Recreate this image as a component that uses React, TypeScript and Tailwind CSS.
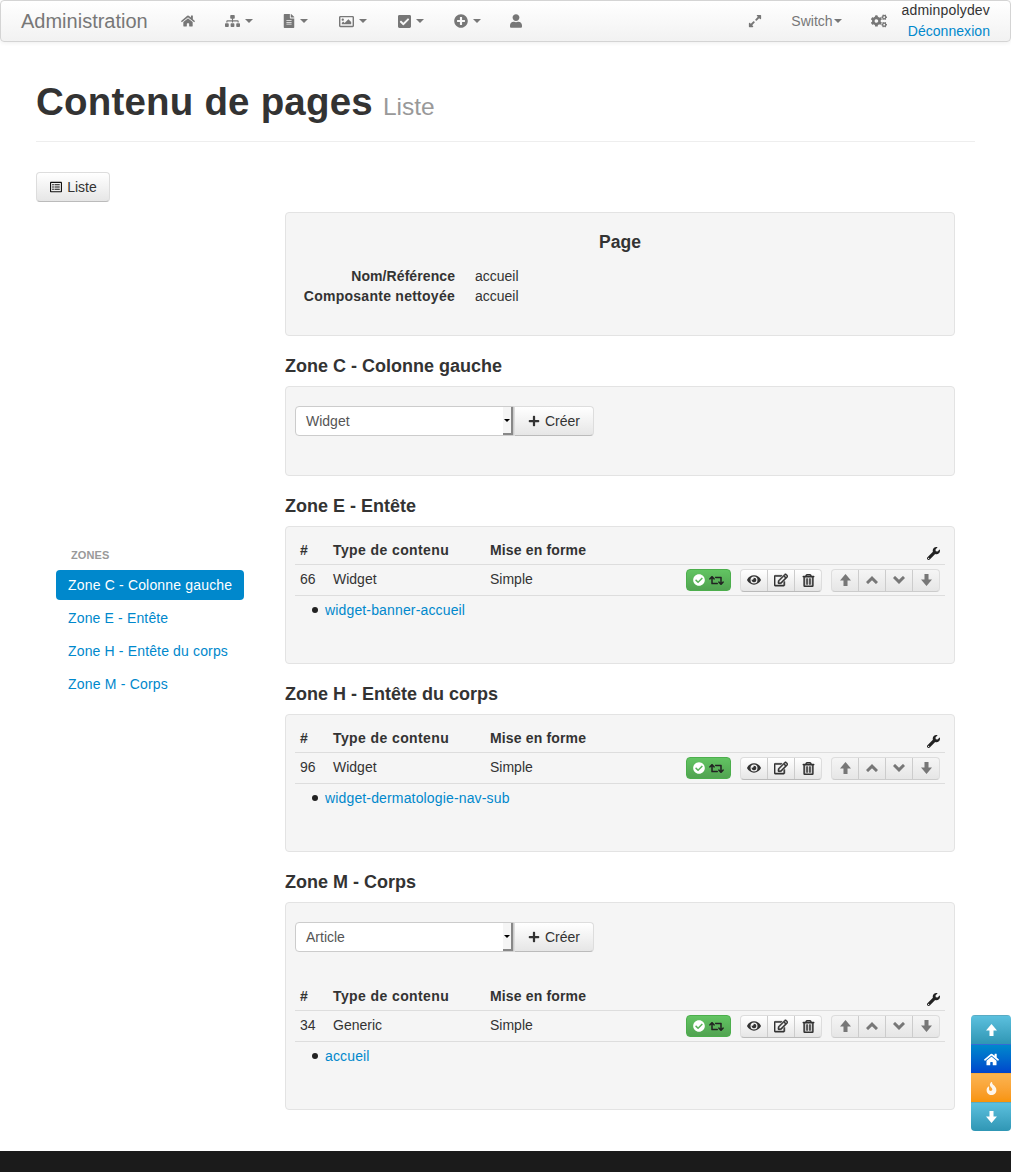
import React from "react";
import {
  FaCheckCircle,
  FaCheckSquare,
  FaCogs,
  FaEye,
  FaFileAlt,
  FaFire,
  FaHome,
  FaPlus,
  FaPlusCircle,
  FaRegEdit,
  FaRegImage,
  FaRegListAlt,
  FaRegTrashAlt,
  FaRetweet,
  FaSitemap,
  FaUser,
  FaWrench,
  FaExpandAlt,
} from "react-icons/fa";

const Caret = ({ className }: { className?: string }) => (
  <span
    className={
      "inline-block h-0 w-0 border-x-[4px] border-t-[4px] border-x-transparent border-t-[#777] " +
      (className || "ml-[5px]")
    }
  />
);

const ArrowUp = () => (
  <svg viewBox="0 0 12 12" className="h-[12px] w-[11px]" preserveAspectRatio="none" fill="currentColor">
    <path d="M6 0 12 6.5H8.2V12H3.8V6.5H0Z" />
  </svg>
);

const ArrowDown = () => (
  <svg viewBox="0 0 12 12" className="h-[12px] w-[11px]" preserveAspectRatio="none" fill="currentColor">
    <path d="M3.8 0H8.2V5.5H12L6 12 0 5.5H3.8Z" />
  </svg>
);

const ChevronUp = () => (
  <svg viewBox="0 0 12 8" className="w-[12px]" fill="none" stroke="currentColor" strokeWidth="3">
    <path d="M1 7 6 2.2 11 7" />
  </svg>
);

const ChevronDown = () => (
  <svg viewBox="0 0 12 8" className="w-[12px]" fill="none" stroke="currentColor" strokeWidth="3">
    <path d="M1 1 6 5.8 11 1" />
  </svg>
);

const NavItem = ({ icon, caret, className }: { icon: React.ReactNode; caret?: boolean; className?: string }) => (
  <div className={"flex items-center text-[#777] " + (className || "px-[15px]")}>
    {icon}
    {caret && <Caret />}
  </div>
);

const CreateForm = ({ value }: { value: string }) => (
  <div className="flex h-[30px] items-center">
    <div className="relative flex h-[30px] w-[219px] items-center rounded-l-[4px] border border-[#ccc] bg-white pl-[10px] text-[#555]">
      {value}
      <div className="absolute right-0 top-0 flex h-[28px] w-[10px] items-center justify-center border-r-2 border-b-2 border-[#888] bg-[#f5f5f5]">
        <span className="h-0 w-0 border-x-[3px] border-t-[3px] border-x-transparent border-t-black" />
      </div>
    </div>
    <button className="flex h-[30px] w-[80px] items-center justify-center gap-[5px] rounded-r-[4px] border border-[#ddd] border-b-[#bbb] bg-gradient-to-b from-white to-[#e6e6e6] text-[#333]">
      <FaPlus className="text-[12px]" />
      Créer
    </button>
  </div>
);

const GroupBtn = ({ children, muted }: { children: React.ReactNode; muted?: boolean }) => (
  <div
    className={
      muted
        ? "flex h-[21px] flex-1 items-center justify-center border-l border-[#ccc] text-[#777] first:border-l-0"
        : "flex h-[21px] flex-1 items-center justify-center border-l border-[#ccc] text-[#333] first:border-l-0"
    }
  >
    {children}
  </div>
);

const ContentTable = ({ id, type, link }: { id: string; type: string; link: string }) => (
  <div>
    <div className="flex h-[30px] items-center border-b border-[#ddd] pt-[1px] font-bold text-[#333]">
      <div className="w-[33px] pl-[5px]">#</div>
      <div className="w-[157px] pl-[5px] tracking-[0.4px]">Type de contenu</div>
      <div className="pl-[5px] tracking-[0.15px]">Mise en forme</div>
      <FaWrench className="ml-auto mr-[5px] mt-[6px] text-[13px] text-[#222]" />
    </div>
    <div className="flex h-[31px] items-center border-b border-[#ddd] text-[#333]">
      <div className="mb-[2px] w-[33px] pl-[5px]">{id}</div>
      <div className="mb-[2px] w-[157px] pl-[5px]">{type}</div>
      <div className="mb-[2px] pl-[5px]">Simple</div>
      <div className="ml-auto flex items-center">
        <div className="flex h-[22px] w-[45px] items-center justify-center gap-[4px] rounded-[4px] border border-[#4cae4c] bg-gradient-to-b from-[#62c462] to-[#51a351]">
          <FaCheckCircle className="text-[12px] text-white" />
          <FaRetweet className="text-[15px] text-[#222]" />
        </div>
        <div className="ml-[9px] flex h-[23px] w-[82px] rounded-[4px] border border-[#ddd] border-b-[#bbb] bg-gradient-to-b from-white to-[#e6e6e6]">
          <GroupBtn><FaEye className="text-[14px]" /></GroupBtn>
          <GroupBtn><FaRegEdit className="stroke-[#333] stroke-[20] text-[14px]" /></GroupBtn>
          <GroupBtn><FaRegTrashAlt className="stroke-[#333] stroke-[20] text-[13px]" /></GroupBtn>
        </div>
        <div className="ml-[9px] mr-[5px] flex h-[23px] w-[109px] rounded-[4px] border border-[#ddd] border-b-[#ccc] bg-gradient-to-b from-[#f5f5f5] to-[#e6e6e6]">
          <GroupBtn muted><ArrowUp /></GroupBtn>
          <GroupBtn muted><ChevronUp /></GroupBtn>
          <GroupBtn muted><ChevronDown /></GroupBtn>
          <GroupBtn muted><ArrowDown /></GroupBtn>
        </div>
      </div>
    </div>
    <div className="flex h-[28px] items-center pl-[17px]">
      <span className="mr-[7px] h-[6px] w-[6px] rounded-full bg-[#222]" />
      <a className="tracking-[0.15px] text-[#0088cc]">{link}</a>
    </div>
  </div>
);

const Well = ({ className, children }: { className: string; children: React.ReactNode }) => (
  <div className={"rounded-[4px] border border-[#e3e3e3] bg-[#f5f5f5] px-[9px] " + className}>
    {children}
  </div>
);

const ZoneTitle = ({ children }: { children: React.ReactNode }) => (
  <h3 className="flex h-[50px] items-center pt-[9px] text-[18px] font-bold text-[#333]">{children}</h3>
);

const SideBtn = ({ className, children }: { className: string; children: React.ReactNode }) => (
  <div className={"flex h-[29px] items-center justify-center border-t border-white/20 text-[12px] text-white " + className}>
    {children}
  </div>
);

export default function App() {
  return (
    <div className="relative h-[1172px] overflow-hidden bg-white font-['Liberation_Sans',sans-serif] text-[14px] leading-[20px]">
      {/* top navbar */}
      <div className="flex h-[42px] items-center rounded-[4px] border border-[#d4d4d4] bg-gradient-to-b from-white to-[#f2f2f2] pl-[20px] shadow-[0_1px_4px_rgba(0,0,0,0.065)]">
        <span className="mr-[19px] text-[20px] text-[#777]">Administration</span>
        <NavItem icon={<FaHome className="w-[14px] shrink-0 text-[14px]" />} className="pl-[14px] pr-[15px]" />
        <NavItem icon={<FaSitemap className="w-[15px] shrink-0" />} caret />
        <NavItem icon={<FaFileAlt className="h-[14px] w-[12px] shrink-0" />} caret className="pl-[15px] pr-[16px]" />
        <NavItem icon={<FaRegImage className="w-[15px] shrink-0 text-[15px]" />} caret className="pl-[15px] pr-[16px]" />
        <NavItem icon={<FaCheckSquare className="w-[13px] shrink-0 text-[15px]" />} caret />
        <NavItem icon={<FaPlusCircle className="w-[14px] shrink-0" />} caret className="pl-[15px] pr-[14px]" />
        <NavItem icon={<FaUser className="w-[12px] shrink-0" />} />
        <div className="ml-auto flex items-center text-[#777]">
          <FaExpandAlt className="mr-[29px] text-[14px]" />
          <span>Switch</span>
          <Caret className="ml-[1px]" />
          <FaCogs className="ml-[29px] text-[16px]" />
          <div className="ml-[15px] mr-[20px] flex flex-col items-end leading-[21px]">
            <span className="tracking-[0.17px] text-[#333]">adminpolydev</span>
            <a className="tracking-[0.05px] text-[#0088cc]">Déconnexion</a>
          </div>
        </div>
      </div>

      <div className="mx-[36px]">
        {/* page header */}
        <div className="flex h-[100px] items-center border-b border-[#eee] pt-[20px]">
          <h1 className="text-[38.5px] font-bold leading-[40px] tracking-[0.2px] text-[#333]">Contenu de pages</h1>
          <small className="ml-[10px] mt-[10px] text-[24.5px] text-[#999]">Liste</small>
        </div>

        <button className="mt-[30px] flex h-[30px] w-[74px] items-center justify-center gap-[5px] rounded-[4px] border border-[#ddd] border-b-[#bbb] bg-gradient-to-b from-white to-[#e6e6e6] pl-[1px] text-[#333]">
          <FaRegListAlt className="text-[12px] text-[#111]" />
          Liste
        </button>

        <div className="mt-[10px] flex">
          {/* zones sidebar */}
          <div className="w-[249px] pl-[20px] pt-[333px]">
            <div className="h-[25px] pl-[15px] text-[11px] font-bold uppercase tracking-[0.1px] text-[#999]">Zones</div>
            <div className="w-[188px] whitespace-nowrap rounded-[4px] bg-[#0088cc] px-[12px] py-[5px] tracking-[0.17px] text-white">Zone C - Colonne gauche</div>
            <div className="flex h-[33px] items-center pl-[12px] pt-[3px] tracking-[0.15px] text-[#0088cc]">Zone E - Entête</div>
            <div className="flex h-[33px] items-center pl-[12px] pt-[3px] tracking-[0.15px] text-[#0088cc]">Zone H - Entête du corps</div>
            <div className="flex h-[33px] items-center pl-[12px] pt-[3px] tracking-[0.2px] text-[#0088cc]">Zone M - Corps</div>
          </div>

          <div className="w-[670px]">
            <Well className="h-[124px] pt-[19px]">
              <div className="text-center text-[17.5px] font-bold leading-[20px] text-[#333]">Page</div>
              <div className="mt-[14px] flex">
                <div className="w-[160px] text-right font-bold tracking-[0.08px] text-[#333]">Nom/Référence</div>
                <div className="ml-[20px] text-[#333]">accueil</div>
              </div>
              <div className="flex">
                <div className="w-[160px] text-right font-bold tracking-[0.26px] text-[#333]">Composante nettoyée</div>
                <div className="ml-[20px] text-[#333]">accueil</div>
              </div>
            </Well>

            <ZoneTitle>Zone C - Colonne gauche</ZoneTitle>
            <Well className="h-[90px] pt-[19px]">
              <CreateForm value="Widget" />
            </Well>

            <ZoneTitle>Zone E - Entête</ZoneTitle>
            <Well className="h-[138px] pt-[8px]">
              <ContentTable id="66" type="Widget" link="widget-banner-accueil" />
            </Well>

            <ZoneTitle>Zone H - Entête du corps</ZoneTitle>
            <Well className="h-[138px] pt-[8px]">
              <ContentTable id="96" type="Widget" link="widget-dermatologie-nav-sub" />
            </Well>

            <ZoneTitle>Zone M - Corps</ZoneTitle>
            <Well className="h-[208px] pt-[19px]">
              <CreateForm value="Article" />
              <div className="mt-[29px]">
                <ContentTable id="34" type="Generic" link="accueil" />
              </div>
            </Well>
          </div>
        </div>
      </div>

      {/* floating shortcuts */}
      <div className="absolute right-0 top-[1015px] w-[40px] overflow-hidden rounded-[4px]">
        <SideBtn className="bg-gradient-to-b from-[#5bc0de] to-[#2f96b4]"><ArrowUp /></SideBtn>
        <SideBtn className="bg-gradient-to-b from-[#0088cc] to-[#0044cc]"><FaHome className="text-[15px]" /></SideBtn>
        <SideBtn className="bg-gradient-to-b from-[#fbb450] to-[#f89406]"><FaFire className="text-[13px] text-white/90" /></SideBtn>
        <SideBtn className="bg-gradient-to-b from-[#5bc0de] to-[#2f96b4]"><ArrowDown /></SideBtn>
      </div>

      {/* footer */}
      <div className="absolute inset-x-0 bottom-0 h-[21px] bg-[#1b1b1b]" />
    </div>
  );
}
